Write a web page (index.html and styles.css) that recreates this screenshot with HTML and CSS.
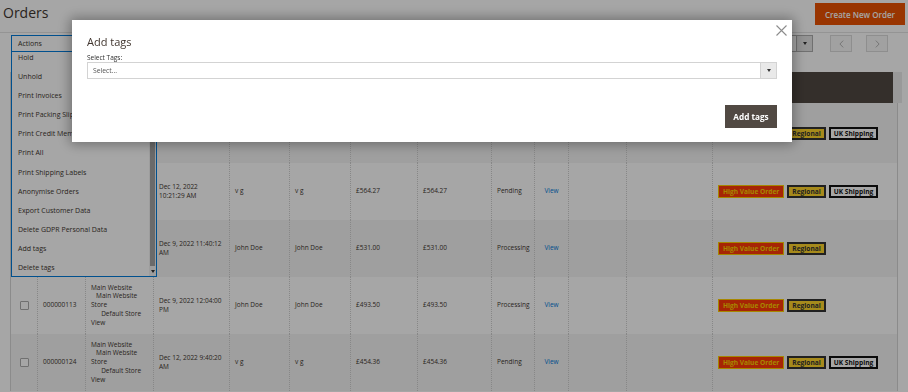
FILE: index.html
```html
<!DOCTYPE html>
<html lang="en">
<head>
  <meta charset="UTF-8">
  <meta name="viewport" content="width=device-width, initial-scale=1.0">
  <title>Orders</title>
  <link rel="stylesheet" href="styles.css">
</head>
<body>
  <!-- Page header -->
  <div class="page-header">
    <h1 class="page-title">Orders</h1>
    <button class="btn-primary">Create New Order</button>
  </div>

  <!-- Grid toolbar -->
  <div class="toolbar">
    <div class="actions">
      <div class="actions-select">Actions</div>
      <div class="actions-menu">
        <div class="menu-items">
          <div class="menu-item">Hold</div>
          <div class="menu-item">Unhold</div>
          <div class="menu-item">Print Invoices</div>
          <div class="menu-item">Print Packing Slips</div>
          <div class="menu-item">Print Credit Memos</div>
          <div class="menu-item">Print All</div>
          <div class="menu-item">Print Shipping Labels</div>
          <div class="menu-item">Anonymise Orders</div>
          <div class="menu-item">Export Customer Data</div>
          <div class="menu-item">Delete GDPR Personal Data</div>
          <div class="menu-item">Add tags</div>
          <div class="menu-item">Delete tags</div>
        </div>
        <div class="menu-scrollbar">
          <div class="scroll-thumb"></div>
          <div class="scroll-arrow"><span class="arrow-down"></span></div>
        </div>
      </div>
    </div>

    <div class="pager">
      <div class="per-page">
        <span class="per-page-value">20</span>
        <span class="per-page-arrow"><span class="arrow-down"></span></span>
      </div>
      <button class="pager-btn">
        <svg width="5" height="8" viewBox="0 0 5 8"><path d="M4.2 0.6 L0.9 4 L4.2 7.4" fill="none" stroke="#b5b5b5" stroke-width="1"/></svg>
      </button>
      <button class="pager-btn">
        <svg width="5" height="8" viewBox="0 0 5 8"><path d="M0.8 0.6 L4.1 4 L0.8 7.4" fill="none" stroke="#b5b5b5" stroke-width="1"/></svg>
      </button>
    </div>
  </div>

  <!-- Orders grid -->
  <table class="grid">
    <colgroup>
      <col class="col-check">
      <col class="col-id">
      <col class="col-point">
      <col class="col-date">
      <col class="col-bill">
      <col class="col-ship">
      <col class="col-base">
      <col class="col-paid">
      <col class="col-status">
      <col class="col-action">
      <col class="col-sources">
      <col class="col-braintree">
      <col class="col-tags">
    </colgroup>
    <thead>
      <tr>
        <th class="cell-check"></th>
        <th>ID</th>
        <th>Purchase Point</th>
        <th>Purchase Date</th>
        <th>Bill-to Name</th>
        <th>Ship-to Name</th>
        <th>Grand Total (Base)</th>
        <th>Grand Total (Purchased)</th>
        <th>Status</th>
        <th>Action</th>
        <th>Allocated sources</th>
        <th>Braintree Transaction Source</th>
        <th class="cell-tags">Tags</th>
      </tr>
    </thead>
    <tbody>
      <tr class="row-first">
        <td class="cell-check"><span class="checkbox"></span></td>
        <td>000000126</td>
        <td>Main Website<br>&nbsp;&nbsp;&nbsp;Main Website Store<br>&nbsp;&nbsp;&nbsp;&nbsp;&nbsp;&nbsp;Default Store View</td>
        <td>Dec 13, 2022 8:15:02 AM</td>
        <td>v g</td>
        <td>v g</td>
        <td>£612.80</td>
        <td>£612.80</td>
        <td>Pending</td>
        <td class="cell-action"><a href="#">View</a></td>
        <td></td>
        <td></td>
        <td>
          <span class="tag tag-value">High Value Order</span><span class="tag tag-regional">Regional</span><span class="tag tag-uk">UK Shipping</span>
        </td>
      </tr>
      <tr>
        <td class="cell-check"><span class="checkbox"></span></td>
        <td>000000125</td>
        <td>Main Website<br>&nbsp;&nbsp;&nbsp;Main Website Store<br>&nbsp;&nbsp;&nbsp;&nbsp;&nbsp;&nbsp;Default Store View</td>
        <td>Dec 12, 2022 10:21:29 AM</td>
        <td>v g</td>
        <td>v g</td>
        <td>£564.27</td>
        <td>£564.27</td>
        <td>Pending</td>
        <td class="cell-action"><a href="#">View</a></td>
        <td></td>
        <td></td>
        <td>
          <span class="tag tag-value">High Value Order</span><span class="tag tag-regional">Regional</span><span class="tag tag-uk">UK Shipping</span>
        </td>
      </tr>
      <tr>
        <td class="cell-check"><span class="checkbox"></span></td>
        <td>000000112</td>
        <td>Main Website<br>&nbsp;&nbsp;&nbsp;Main Website Store<br>&nbsp;&nbsp;&nbsp;&nbsp;&nbsp;&nbsp;Default Store View</td>
        <td>Dec 9, 2022 11:40:12 AM</td>
        <td>John Doe</td>
        <td>John Doe</td>
        <td>£531.00</td>
        <td>£531.00</td>
        <td>Processing</td>
        <td class="cell-action"><a href="#">View</a></td>
        <td></td>
        <td></td>
        <td>
          <span class="tag tag-value">High Value Order</span><span class="tag tag-regional">Regional</span>
        </td>
      </tr>
      <tr>
        <td class="cell-check"><span class="checkbox"></span></td>
        <td>000000113</td>
        <td>Main Website<br>&nbsp;&nbsp;&nbsp;Main Website Store<br>&nbsp;&nbsp;&nbsp;&nbsp;&nbsp;&nbsp;Default Store View</td>
        <td>Dec 9, 2022 12:04:00 PM</td>
        <td>John Doe</td>
        <td>John Doe</td>
        <td>£493.50</td>
        <td>£493.50</td>
        <td>Processing</td>
        <td class="cell-action"><a href="#">View</a></td>
        <td></td>
        <td></td>
        <td>
          <span class="tag tag-value">High Value Order</span><span class="tag tag-regional">Regional</span>
        </td>
      </tr>
      <tr>
        <td class="cell-check"><span class="checkbox"></span></td>
        <td>000000124</td>
        <td>Main Website<br>&nbsp;&nbsp;&nbsp;Main Website Store<br>&nbsp;&nbsp;&nbsp;&nbsp;&nbsp;&nbsp;Default Store View</td>
        <td>Dec 12, 2022 9:40:20 AM</td>
        <td>v g</td>
        <td>v g</td>
        <td>£454.36</td>
        <td>£454.36</td>
        <td>Pending</td>
        <td class="cell-action"><a href="#">View</a></td>
        <td></td>
        <td></td>
        <td>
          <span class="tag tag-value">High Value Order</span><span class="tag tag-regional">Regional</span><span class="tag tag-uk">UK Shipping</span>
        </td>
      </tr>
    </tbody>
  </table>

  <!-- Add tags modal -->
  <div class="overlay"></div>
  <div class="modal">
    <button class="modal-close" aria-label="Close">
      <svg width="11" height="11" viewBox="0 0 11 11"><path d="M0.5 0.5 L10.5 10.5 M10.5 0.5 L0.5 10.5" stroke="#8c8c8c" stroke-width="1.1"/></svg>
    </button>
    <h2 class="modal-title">Add tags</h2>
    <label class="field-label">Select Tags:</label>
    <div class="field-select">
      <span class="field-value">Select...</span>
      <span class="field-arrow"><span class="arrow-down"></span></span>
    </div>
    <div class="modal-footer">
      <button class="btn-secondary">Add tags</button>
    </div>
  </div>
</body>
</html>
```

FILE: styles.css
```css
/* General Styles */
* {
  box-sizing: border-box;
}

body {
  font-family: "Open Sans", Arial, sans-serif;
  margin: 0;
  color: #41362f;
  background-color: #fff;
  width: 908px;
  height: 392px;
  overflow: hidden;
}

/* Page Header */
.page-header {
  display: flex;
  justify-content: space-between;
  align-items: flex-start;
  height: 33px;
  padding: 3px 3px 0 3px;
  border-bottom: 1px solid #e3e3e3;
}

.page-title {
  margin: 0;
  font-size: 14px;
  line-height: 20px;
  font-weight: 400;
}

.btn-primary {
  width: 90px;
  height: 22px;
  padding: 0;
  background-color: #eb5202;
  border: 1px solid #eb5202;
  color: #fff;
  font-family: inherit;
  font-size: 8px;
  font-weight: 600;
}

/* Toolbar */
.toolbar {
  display: flex;
  justify-content: space-between;
  align-items: center;
  height: 17px;
  margin: 2px 20px 20px 11px;
}

.actions {
  position: relative;
  width: 145px;
}

.actions-select {
  height: 17px;
  padding-left: 6px;
  border: 1px solid #007bdb;
  background-color: #fff;
  font-size: 7px;
  line-height: 15px;
}

.actions-menu {
  position: absolute;
  top: 100%;
  left: 0;
  z-index: 2;
  display: flex;
  width: 146px;
  height: 225px;
  border: 1px solid #007bdb;
  border-top: none;
  background-color: #fff;
  overflow: hidden;
}

.menu-items {
  flex: 1;
  margin-top: -4px;
}

.menu-item {
  height: 19.1px;
  padding-left: 6px;
  font-size: 7px;
  line-height: 19px;
  white-space: nowrap;
  overflow: hidden;
}

.menu-scrollbar {
  display: flex;
  flex-direction: column;
  width: 7px;
  padding: 1px 1px 0 1px;
  background-color: #f1f1f1;
}

.scroll-thumb {
  flex: 1;
  background-color: #a3a3a3;
}

.scroll-arrow {
  display: flex;
  justify-content: center;
  align-items: center;
  height: 10px;
}

.arrow-down {
  width: 0;
  height: 0;
  border-left: 2.5px solid transparent;
  border-right: 2.5px solid transparent;
  border-top: 3px solid #333;
}

.pager {
  display: flex;
  align-items: center;
}

.per-page {
  display: flex;
  width: 53px;
  height: 17px;
  margin-right: 17px;
  border: 1px solid #adadad;
  background-color: #fff;
}

.per-page-value {
  flex: 1;
  padding-left: 5px;
  font-size: 7px;
  line-height: 15px;
}

.per-page-arrow {
  display: flex;
  justify-content: center;
  align-items: center;
  width: 16px;
  background-color: #e3e3e3;
  border-left: 1px solid #adadad;
}

.pager-btn {
  display: flex;
  justify-content: center;
  align-items: center;
  width: 22px;
  height: 17px;
  padding: 0;
  border: 1px solid #dadada;
  background-color: #f8f8f8;
}

.pager-btn + .pager-btn {
  margin-left: 14px;
}

/* Grid */
.grid {
  width: 887px;
  margin-left: 10px;
  border-collapse: collapse;
  table-layout: fixed;
  border-left: 1px solid #d6d6d6;
  border-right: 1px solid #d6d6d6;
  font-size: 6.5px;
  line-height: 8.7px;
}

.col-check { width: 27px; }
.col-id { width: 48px; }
.col-point { width: 68px; }
.col-date { width: 76px; }
.col-bill { width: 60px; }
.col-ship { width: 61px; }
.col-base { width: 67px; }
.col-paid { width: 74px; }
.col-status { width: 43px; }
.col-action { width: 34px; }
.col-sources { width: 58px; }
.col-braintree { width: 86px; }
.col-tags { width: 185px; }

.grid th {
  height: 31px;
  padding: 0 5px;
  background-color: #514943;
  color: #fff;
  font-weight: 600;
  text-align: left;
}

.grid th.cell-tags {
  border-right: 9px solid #ececec;
}

.grid tbody tr {
  height: 57px;
}

.grid tbody tr.row-first {
  height: 60px;
}

.grid tbody tr:nth-child(odd) {
  background-color: #f4f4f4;
}

.grid td {
  padding: 6px 5px;
  vertical-align: middle;
  border-left: 1px dotted #d0d0d0;
}

.grid td.cell-check {
  text-align: center;
  border-left: none;
}

.grid td.cell-action {
  text-align: center;
}

.grid td a {
  color: #007bdb;
  text-decoration: none;
}

.checkbox {
  display: inline-block;
  width: 9px;
  height: 9px;
  border: 1px solid #adadad;
  border-radius: 1px;
  background-color: #fff;
  vertical-align: middle;
}

/* Tags */
.tag {
  display: inline-block;
  height: 13px;
  margin-right: 3px;
  padding: 0 3px;
  font-size: 6.6px;
  font-weight: 700;
  vertical-align: middle;
  white-space: nowrap;
}

.tag-value {
  padding: 0 4px;
  line-height: 11px;
  border: 1px solid #ffd000;
  background-color: #ff3a08;
  color: #ffd000;
}

.tag-regional {
  line-height: 9px;
  border: 2px solid #333;
  background-color: #ffd52c;
  color: #333;
}

.tag-uk {
  line-height: 9px;
  border: 2px solid #111;
  background-color: #fff;
  color: #111;
}

/* Modal */
.overlay {
  position: fixed;
  top: 0;
  left: 0;
  width: 100%;
  height: 100%;
  z-index: 5;
  background-color: rgba(0, 0, 0, 0.35);
}

.modal {
  position: fixed;
  top: 20px;
  left: 72px;
  z-index: 6;
  width: 720px;
  padding: 14px 15px;
  background-color: #fff;
  box-shadow: 0 0 12px 2px rgba(0, 0, 0, 0.35);
}

.modal-close {
  position: absolute;
  top: 5px;
  right: 5px;
  width: 11px;
  height: 11px;
  padding: 0;
  border: none;
  background: none;
  line-height: 0;
}

.modal-title {
  margin: 0 0 5px;
  font-size: 11px;
  line-height: 15px;
  font-weight: 400;
  color: #41362f;
}

.field-label {
  display: block;
  font-size: 6.5px;
  line-height: 8px;
  color: #303030;
}

.field-select {
  display: flex;
  height: 17px;
  border: 1px solid #d3d3d3;
}

.field-value {
  flex: 1;
  padding-left: 5px;
  font-size: 6.8px;
  line-height: 15px;
  color: #555;
}

.field-arrow {
  display: flex;
  justify-content: center;
  align-items: center;
  width: 16px;
  background-color: #e9e9e9;
  border-left: 1px solid #d3d3d3;
}

.modal-footer {
  display: flex;
  justify-content: flex-end;
  margin-top: 26px;
}

.btn-secondary {
  width: 52px;
  height: 23px;
  padding: 0;
  background-color: #514943;
  border: 1px solid #514943;
  color: #fff;
  font-family: inherit;
  font-size: 8.2px;
  font-weight: 700;
}
```
